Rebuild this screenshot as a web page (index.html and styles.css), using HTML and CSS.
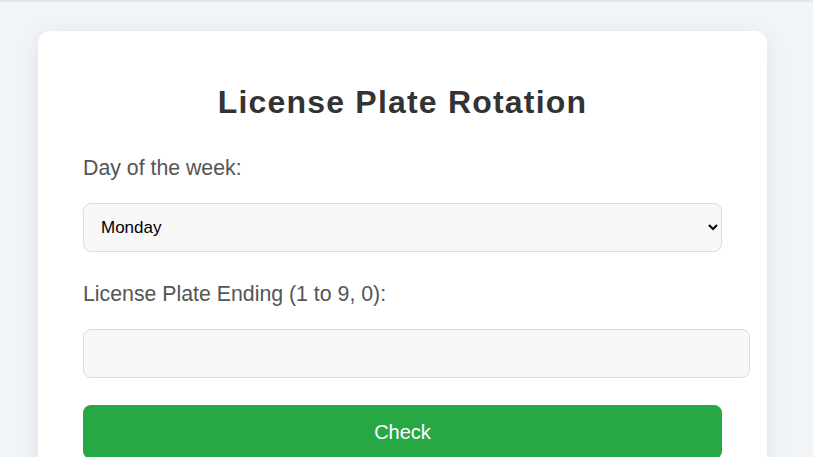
FILE: index.html
```html
<!DOCTYPE html>
<html lang="en">
<head>
<meta charset="utf-8">
<title>License Plate Rotation</title>
<link rel="stylesheet" href="styles.css">
</head>
<body>
<div class="topbar"></div>
<main class="page">
  <section class="card">
    <h1 class="title">License Plate Rotation</h1>
    <label class="label" for="day">Day of the week:</label>
    <select id="day" class="select">
      <option>Monday</option>
      <option>Tuesday</option>
      <option>Wednesday</option>
      <option>Thursday</option>
      <option>Friday</option>
    </select>
    <label class="label" for="plate">License Plate Ending (1 to 9, 0):</label>
    <input id="plate" class="input" type="text">
    <button class="button" type="button">Check</button>
  </section>
</main>
</body>
</html>
```
FILE: styles.css
```css
html, body {
  margin: 0;
  padding: 0;
  background: #f2f5f8;
  font-family: "Liberation Sans", Arial, sans-serif;
  overflow: hidden;
  height: 457px;
}
.topbar {
  height: 2px;
  background: #e3e6ea;
}
.page {
  padding: 29px 46px 0 38px;
}
.card {
  background: #ffffff;
  border-radius: 12px;
  box-shadow: 0 4px 24px rgba(40, 60, 90, 0.10);
  padding: 45px 45px 40px;
  display: flex;
  flex-direction: column;
  align-items: flex-start;
}
.title {
  align-self: stretch;
  text-align: center;
  margin: 8px 0 35px;
  font-size: 32px;
  font-weight: bold;
  letter-spacing: 1.2px;
  color: #333333;
}
.label {
  display: block;
  font-size: 21.3px;
  color: #555555;
  margin-bottom: 22px;
}
.select {
  box-sizing: border-box;
  width: 100%;
  height: 49px;
  padding: 0 13px;
  font-family: "Liberation Sans", Arial, sans-serif;
  font-size: 17px;
  color: #000;
  background: #f8f8f8;
  border: 1px solid #dddddd;
  border-radius: 8px;
  margin-bottom: 30px;
}
.input {
  box-sizing: content-box;
  width: 100%;
  height: 21px;
  padding: 13px;
  font-size: 16px;
  background: #f8f8f8;
  border: 1px solid #dddddd;
  border-radius: 8px;
  margin-bottom: 27px;
}
.button {
  box-sizing: border-box;
  width: 100%;
  height: 54px;
  border: none;
  border-radius: 8px;
  background: #28a745;
  color: #ffffff;
  font-family: "Liberation Sans", Arial, sans-serif;
  font-size: 20px;
}
```
